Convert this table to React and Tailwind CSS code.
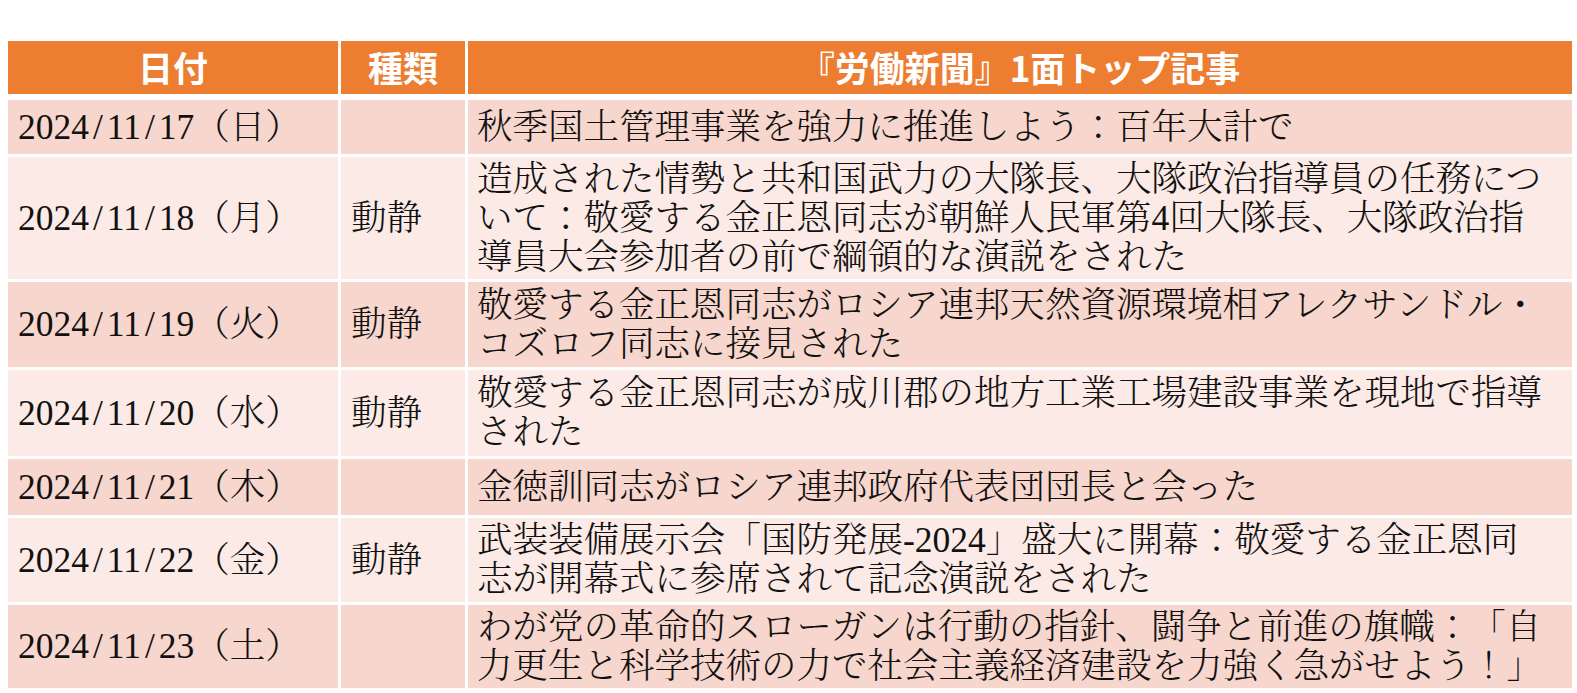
import React from 'react';

const rows = [
  { date: ['2024', '11', '17'], day: '日', kind: '', lines: ['秋季国土管理事業を強力に推進しよう：百年大計で'], h: 'h-[54px]', tone: 'dark' },
  {
    date: ['2024', '11', '18'], day: '月', kind: '動静', h: 'h-[122px]', tone: 'light',
    lines: [
      '造成された情勢と共和国武力の大隊長、大隊政治指導員の任務につ',
      'いて：敬愛する金正恩同志が朝鮮人民軍第4回大隊長、大隊政治指',
      '導員大会参加者の前で綱領的な演説をされた',
    ],
  },
  {
    date: ['2024', '11', '19'], day: '火', kind: '動静', h: 'h-[85px]', tone: 'dark',
    lines: ['敬愛する金正恩同志がロシア連邦天然資源環境相アレクサンドル・', 'コズロフ同志に接見された'],
  },
  {
    date: ['2024', '11', '20'], day: '水', kind: '動静', h: 'h-[86px]', tone: 'light',
    lines: ['敬愛する金正恩同志が成川郡の地方工業工場建設事業を現地で指導', 'された'],
  },
  { date: ['2024', '11', '21'], day: '木', kind: '', lines: ['金徳訓同志がロシア連邦政府代表団団長と会った'], h: 'h-[56px]', tone: 'dark' },
  {
    date: ['2024', '11', '22'], day: '金', kind: '動静', h: 'h-[84px]', tone: 'light',
    lines: ['武装装備展示会「国防発展-2024」盛大に開幕：敬愛する金正恩同', '志が開幕式に参席されて記念演説をされた'],
  },
  {
    date: ['2024', '11', '23'], day: '土', kind: '', h: 'h-[83px]', tone: 'dark',
    lines: ['わが党の革命的スローガンは行動の指針、闘争と前進の旗幟：「自', '力更生と科学技術の力で社会主義経済建設を力強く急がせよう！」'],
  },
];

const bodyFont = "font-['Liberation_Serif','Noto_Serif_CJK_JP','Noto_Sans_CJK_JP',serif]";

const Slash = () => <span className="inline-block w-[0.5em] text-center">/</span>;

const DateCell = ({ date, day }) => (
  <span className="whitespace-nowrap">
    {date[0]}<Slash />{date[1]}<Slash />{date[2]}（{day}）
  </span>
);

const App = () => {
  return (
    <div className="w-[1577px] h-[693px] bg-white pt-[41px] pl-[8px] overflow-hidden [text-spacing-trim:space-all]">
      <div className="flex flex-col gap-[3px] w-[1564px]">
        <div className="grid grid-cols-[330px_124px_1104px] gap-[3px] h-[53px] mb-[3px] text-white font-bold text-[35px] font-['Noto_Sans_CJK_JP',sans-serif]">
          <div className="bg-[#ed7d31] flex items-center justify-center">日付</div>
          <div className="bg-[#ed7d31] flex items-center justify-center">種類</div>
          <div className="bg-[#ed7d31] flex items-center justify-center">『労働新聞』1面トップ記事</div>
        </div>

        {rows.map((row, i) => {
          const bg = row.tone === 'dark' ? 'bg-[#f7d6cd]' : 'bg-[#fbeae6]';
          return (
            <div
              key={i}
              className={`grid grid-cols-[330px_124px_1104px] gap-[3px] ${row.h} text-[35.5px] leading-[39px] text-[#111] font-light ${bodyFont}`}
            >
              <div className={`${bg} flex items-center pl-[10px]`}>
                <DateCell date={row.date} day={row.day} />
              </div>
              <div className={`${bg} flex items-center pl-[10px]`}>{row.kind}</div>
              <div className={`${bg} flex flex-col justify-center pl-[9px]`}>
                {row.lines.map((line, j) => (
                  <div key={j} className="whitespace-nowrap">{line}</div>
                ))}
              </div>
            </div>
          );
        })}
      </div>
    </div>
  );
};

export default App;
